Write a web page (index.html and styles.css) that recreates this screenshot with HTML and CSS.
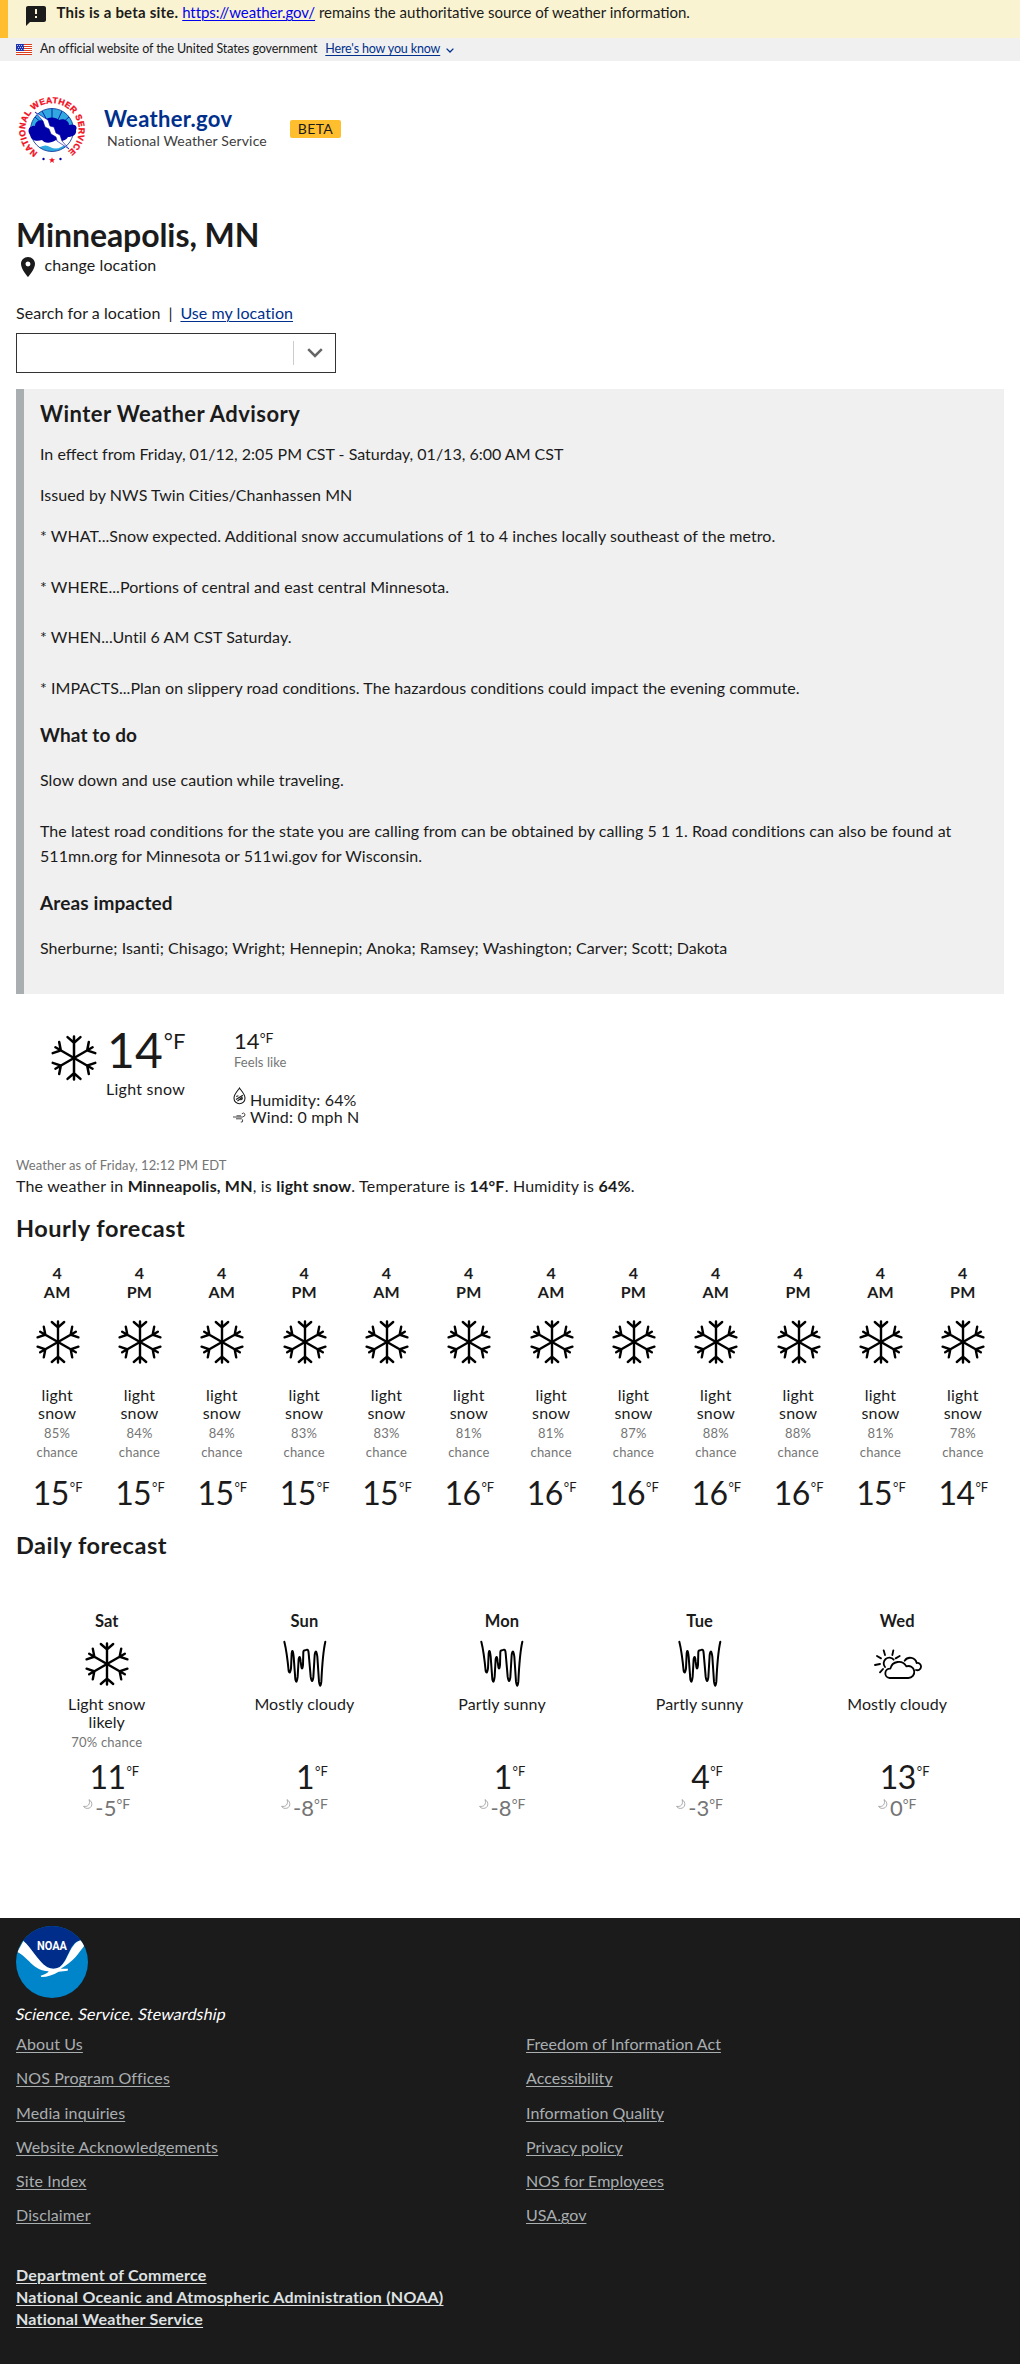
FILE: index.html
```html
<!DOCTYPE html>
<html lang="en">
<head>
<meta charset="utf-8">
<title>Weather.gov</title>
<link rel="stylesheet" href="styles.css">
</head>
<body>
<svg class="sprite" width="0" height="0">
  <symbol id="snow" viewBox="-24 -24 48 48">
    <g fill="none" stroke="#000" stroke-width="2.4" stroke-linecap="round">
      <path id="flake-arm" d="M0 0V-20.6M-6.2-20L0-14.6L6.2-20"/>
      <use href="#flake-arm" transform="rotate(60)"/>
      <use href="#flake-arm" transform="rotate(120)"/>
      <use href="#flake-arm" transform="rotate(180)"/>
      <use href="#flake-arm" transform="rotate(240)"/>
      <use href="#flake-arm" transform="rotate(300)"/>
    </g>
  </symbol>
  <symbol id="scribble" viewBox="841 150 144 144">
    <path fill="none" stroke="#000" stroke-width="6" stroke-linecap="round" d="M851 155C856 175 860 200 864 243Q868 255 871 235L873 190Q876 172 879 200L884 268Q888 285 891 260L894 207Q898 192 900 215L902 230Q905 243 907 225L908 185Q908 182 913 181L919 179Q923 178 924 190L930 260Q934 285 938 262L942 195Q946 172 950 200L955 275Q959 300 962 275Q966 190 974 155"/>
  </symbol>
  <symbol id="suncloud" viewBox="1119 150 144 144">
    <g fill="none" stroke="#000" stroke-width="5.5" stroke-linecap="round" stroke-linejoin="round">
      <path d="M1166 264H1222A18 18 0 1 0 1216 229A26 26 0 0 0 1168 236A14 14 0 0 0 1166 264Z"/>
      <path d="M1211 212A20 20 0 0 1 1247 219A11 11 0 1 1 1245 240"/>
      <path d="M1152 231A17 17 0 1 1 1178 209"/>
      <path d="M1148 181L1152 195M1177 181L1174 195M1128 198L1140 205M1122 225L1137 222M1137 247L1146 237M1184 205L1196 198"/>
    </g>
  </symbol>
  <symbol id="moon" viewBox="0 0 10 10">
    <path fill="none" stroke="#8a8a8a" stroke-width=".7" d="M6 .6C10.5 3.2 9.4 9.4 4.4 9.4C2.6 9.4 1.2 8.6.6 7.3C5 8.2 7.6 5 6 .6Z"/>
  </symbol>
</svg>

<div class="beta-bar">
  <svg class="beta-bar-icon" width="24" height="24" viewBox="0 0 24 24"><path fill="#1b1b1b" d="M20 2H4c-1.1 0-1.99.9-1.99 2L2 22l4-4h14c1.1 0 2-.9 2-2V4c0-1.1-.9-2-2-2zm-7 12h-2v-2h2v2zm0-4h-2V5h2v5z"/></svg>
  <p><strong>This is a beta site.</strong> <a href="#">https://weather.gov/</a> remains the authoritative source of weather information.</p>
</div>
<div class="gov-banner">
  <svg class="flag" width="16" height="11" viewBox="0 0 16 11"><path fill="#fff" d="M0 0h16v11H0z"/><path fill="#db3e1f" d="M0 0h16v1H0zM0 2h16v1H0zM0 4h16v1H0zM0 6h16v1H0zM0 8h16v1H0zM0 10h16v1H0z"/><path fill="#1e33b1" d="M0 0h8v7H0z"/><path stroke="#fff" stroke-width=".8" stroke-dasharray=".9 1.1" d="M1 1.5h6.5M2 3.5h5.5M1 5.5h6.5"/></svg>
  <span class="gov-text">An official website of the United States government</span>
  <a class="gov-link" href="#">Here's how you know</a>
  <svg width="8" height="5" viewBox="0 0 8 5"><path d="M.6.6L4 4L7.4.6" fill="none" stroke="#00308c" stroke-width="1.3"/></svg>
</div>

<header class="header">
  <svg class="nws" width="72" height="72" viewBox="-36 -36 72 72">
    <defs>
      <path id="ring" d="M-14.2 22.700A26.800 26.800 0 1 1 14.2 22.700"/>
      <clipPath id="disc"><circle r="21.500"/></clipPath>
    </defs>
    <g clip-path="url(#disc)">
      <circle r="21.500" fill="#fff"/>
      <path fill="#2fa9e0" d="M-22-22H22V-4H-22ZM-22 17Q-16 19-12 17Q-6 14-2 17Q4 20 9 17Q15 13 22 17V24H-22Z"/>
      <path d="M-17-13L-8-5M-10-19L-4-8M0-22V-8M10-19L5-8M17-13L9-6" stroke="#0000a0" stroke-width=".8"/>
    </g>
    <circle r="21.500" fill="none" stroke="#123f9e" stroke-width=".9"/>
    <path fill="#0000a8" d="M-22 5C-26-1-21-5-17-4C-17-9-11-11-8-9C-4-14 4-13 7-10C12-12 17-9 17-5C23-7 26-3 24 0C25 5 20 7 16 7C14 11 8 12 4 10C-2 14-8 13-10 10C-16 12-21 10-22 5Z"/>
    <path fill="#fff" stroke="#0000a8" stroke-width=".6" d="M-17-18L-4-10L-2-4L2-3L4 3L8 5L10 11L17 19L5 11L4 7L-1 4L-3-1L-7-3L-9-9Z"/>
    <text class="ring-text"><textPath href="#ring" textLength="136" lengthAdjust="spacing">NATIONAL WEATHER SERVICE</textPath></text>
    <path fill="#f00d1c" d="M0 27.200L.8 29.300H3L1.300 30.700L1.900 32.900L0 31.600L-1.900 32.900L-1.300 30.700L-3 29.300H-.8Z"/>
    <circle cx="-8.500" cy="29" r="1.200" fill="#0000a8"/><circle cx="8.500" cy="29" r="1.200" fill="#0000a8"/>
  </svg>
  <div class="brand">
    <div class="brand-name">Weather.gov</div>
    <div class="brand-sub">National Weather Service</div>
  </div>
  <span class="beta-tag">BETA</span>
</header>

<main>
  <h1>Minneapolis, MN</h1>
  <div class="change"><svg width="24" height="24" viewBox="0 0 24 24"><path fill="#1b1b1b" d="M12 2C8.130 2 5 5.130 5 9c0 5.250 7 13 7 13s7-7.750 7-13c0-3.870-3.130-7-7-7zm0 9.500a2.500 2.500 0 0 1 0-5 2.500 2.500 0 0 1 0 5z"/></svg><span>change location</span></div>
  <div class="search-label"><span>Search for a location</span><span class="bar">|</span><a href="#">Use my location</a></div>
  <div class="combo"><i class="combo-sep"></i><svg width="16" height="10" viewBox="0 0 16 10"><path d="M1.200 1.200L8 8L14.800 1.200" fill="none" stroke="#666" stroke-width="2.500"/></svg></div>

  <section class="alert">
    <h2>Winter Weather Advisory</h2>
    <p class="effect">In effect from Friday, 01/12, 2:05 PM CST - Saturday, 01/13, 6:00 AM CST</p>
    <p>Issued by NWS Twin Cities/Chanhassen MN</p>
    <p>* WHAT...Snow expected. Additional snow accumulations of 1 to 4 inches locally southeast of the metro.<br><br>* WHERE...Portions of central and east central Minnesota.<br><br>* WHEN...Until 6 AM CST Saturday.<br><br>* IMPACTS...Plan on slippery road conditions. The hazardous conditions could impact the evening commute.</p>
    <h3>What to do</h3>
    <p>Slow down and use caution while traveling.<br><br>The latest road conditions for the state you are calling from can be obtained by calling 5 1 1. Road conditions can also be found at<br>511mn.org for Minnesota or 511wi.gov for Wisconsin.</p>
    <h3>Areas impacted</h3>
    <p>Sherburne; Isanti; Chisago; Wright; Hennepin; Anoka; Ramsey; Washington; Carver; Scott; Dakota</p>
  </section>

  <section class="current">
    <svg class="now-icon" width="50" height="50"><use href="#snow"/></svg>
    <div class="now">
      <div class="now-temp">14<sup>°F</sup></div>
      <div class="now-text">Light snow</div>
    </div>
    <div class="details">
      <div class="feels">14<sup>°F</sup></div>
      <div class="feels-label">Feels like</div>
      <div class="detail first"><svg width="13" height="18" viewBox="0 0 13 18"><path d="M6.500 1C8 3.500 12 7 12 11.200A5.500 5.500 0 0 1 1 11.200C1 7 5 3.500 6.500 1Z" fill="none" stroke="#1b1b1b" stroke-width="1.100"/><path d="M3 12.500L9.800 8.200M3.200 9.500l2.200-.8M7.500 13l2.400-1.400M4.500 14l5-4" stroke="#1b1b1b" stroke-width="1.100"/></svg><span>Humidity: 64%</span></div>
      <div class="detail"><svg width="13" height="17" viewBox="0 0 13 17"><path d="M0 9H9.500Q12.300 8.500 12 6.200Q10.500 4 8.800 5.800M3 10.800H8.500Q10.500 11.500 9.300 14H7.800M3.500 7.800H8" fill="none" stroke="#333" stroke-width=".9"/></svg><span>Wind: 0 mph N</span></div>
    </div>
  </section>
  <p class="asof">Weather as of Friday, 12:12 PM EDT</p>
  <p class="summary">The weather in <b>Minneapolis, MN</b>, is <b>light snow</b>. Temperature is <b>14°F</b>. Humidity is <b>64%</b>.</p>

  <h2 class="forecast-title">Hourly forecast</h2>
  <div class="hourly" id="hourly"></div>
  <h2 class="forecast-title daily-title">Daily forecast</h2>
  <div class="daily" id="daily"></div>
</main>

<footer>
  <svg class="noaa" width="72" height="72" viewBox="0 0 216 216">
    <defs><clipPath id="seal"><circle cx="108" cy="108" r="108"/></clipPath></defs>
    <g clip-path="url(#seal)">
      <path fill="#0085ca" d="M0 0H216V216H0Z"/>
      <path fill="#002d8a" d="M0-10H216L195 43Q172 44 158 80Q140 124 120 128Q96 132 70 104Q50 78 22 43Z"/>
      <path fill="#fff" d="M22 45C48 66 62 102 94 124Q112 132 130 124C158 106 160 52 194 43L206 58C186 84 172 108 134 128L156 128L155 134L128 137Q104 152 76 153L74 149Q92 145 98 136C50 134 36 92 4 78Z"/>
    </g>
    <text x="108" y="71" text-anchor="middle" textLength="90" lengthAdjust="spacingAndGlyphs" class="noaa-text">NOAA</text>
  </svg>
  <p class="motto">Science. Service. Stewardship</p>
  <div class="links">
    <ul><li><a href="#">About Us</a></li><li><a href="#">NOS Program Offices</a></li><li><a href="#">Media inquiries</a></li><li><a href="#">Website Acknowledgements</a></li><li><a href="#">Site Index</a></li><li><a href="#">Disclaimer</a></li></ul>
    <ul class="second"><li><a href="#">Freedom of Information Act</a></li><li><a href="#">Accessibility</a></li><li><a href="#">Information Quality</a></li><li><a href="#">Privacy policy</a></li><li><a href="#">NOS for Employees</a></li><li><a href="#">USA.gov</a></li></ul>
  </div>
  <div class="agencies"><a href="#">Department of Commerce</a><a href="#">National Oceanic and Atmospheric Administration (NOAA)</a><a href="#">National Weather Service</a></div>
</footer>
<script src="forecast.js"></script>
</body>
</html>
```
FILE: styles.css
```css
* { box-sizing: border-box; }
body { margin: 0; background: #fff; color: #1b1b1b; font: 16px/24px Lato, "Noto Sans", sans-serif; letter-spacing: .06px; }
h1, h2, h3, p, ul { margin: 0; padding: 0; }
li { list-style: none; }
svg { display: block; flex: none; }
.sprite { position: absolute; }
a { color: #00308c; text-decoration-thickness: 1px; text-underline-offset: 2px; }
sup { line-height: 0; }

.beta-bar { display: flex; height: 38px; padding-left: 16px; border-left: 8px solid #ffbe2e; background: #faf3d1; font-size: 15px; line-height: 24px; letter-spacing: 0; }
.beta-bar-icon { margin: 4px 8.5px 0 0; }
.beta-bar strong { letter-spacing: .22px; }
.beta-bar a { color: #0000ee; letter-spacing: -.1px; }

.gov-banner { display: flex; height: 23px; padding-left: 16px; background: #f0f0f0; font-size: 12.5px; line-height: 21px; letter-spacing: -.11px; }
.flag { margin: 6px 8px 0 0; }
.gov-text { margin-right: 8px; }
.gov-link { margin-right: 6px; letter-spacing: -.15px; }
.gov-banner svg:last-child { margin-top: 10px; }

.header { display: flex; align-items: flex-start; height: 154px; padding: 33px 16px 0; }
.brand { width: 186px; margin: 12px 0 0 16px; }
.brand-name { color: #00308c; font-size: 22px; font-weight: 700; line-height: 26px; letter-spacing: .33px; }
.brand-sub { padding-left: 3px; color: #3d3d3d; font-size: 14px; line-height: 18px; letter-spacing: .15px; }
.beta-tag { width: 51px; height: 18px; margin-top: 26px; border-radius: 2px; background: #ffbe2e; font-size: 14px; line-height: 17px; letter-spacing: .4px; text-align: center; }
.ring-text { fill: #f00d1c; stroke: #f00d1c; stroke-width: .3px; font: 700 8.6px "Liberation Sans Narrow", "Liberation Sans", sans-serif; letter-spacing: 0; }

main { display: block; padding: 0 16px; height: 1703px; }
h1 { height: 38px; font-size: 32px; line-height: 40px; letter-spacing: -.08px; }
.change { display: flex; height: 24px; gap: 4.5px; letter-spacing: .12px; }
.change svg { margin-top: 2px; }
.search-label { display: flex; margin-top: 24px; }
.bar { width: 20px; text-align: center; }
.combo { display: flex; align-items: center; justify-content: flex-end; gap: 13px; width: 320px; height: 40px; margin-top: 8px; padding-right: 12px; border: 1px solid #333; }
.combo-sep { width: 1px; height: 24px; background: #ccc; }

.alert { height: 605px; margin-top: 16px; padding: 11px 16px 0; border-left: 8px solid #a9aeb1; background: #f0f0f0; }
.alert h2 { font-size: 22px; line-height: 28px; letter-spacing: .46px; }
.alert h3 { margin: 22.3px 0 20.5px; font-size: 19px; line-height: 24px; letter-spacing: .12px; }
.alert p { line-height: 25.3px; }
.alert p + p { margin-top: 15.8px; }
.alert .effect { margin-top: 13px; letter-spacing: 0; }

.current { display: flex; align-items: flex-start; height: 161px; padding: 31px 0 0 33px; }
.now-icon { margin-top: 8px; }
.now { width: 128px; margin-left: 7px; }
.now-temp { padding-left: 1px; font-size: 48px; line-height: 49px; height: 48px; }
.now-temp sup { margin-left: 1px; font-size: 22px; vertical-align: 19px; }
.now-text { margin-top: 6px; line-height: 20px; letter-spacing: .26px; }
.details { margin-top: 2.5px; }
.feels { font-size: 22px; line-height: 26px; }
.feels sup { font-size: 14px; vertical-align: 6px; }
.feels-label { color: #757575; font-size: 13px; line-height: 16px; }
.detail { display: flex; height: 17px; gap: 4px; margin-left: -1px; line-height: 17px; letter-spacing: .18px; }
.first { margin-top: 21px; }
.first svg { margin-top: -4px; }
.asof { color: #757575; font-size: 13px; line-height: 20px; height: 19px; letter-spacing: .07px; }
.summary { line-height: 24px; letter-spacing: .19px; }

.forecast-title { margin-top: 16px; font-size: 23.5px; line-height: 28px; letter-spacing: .52px; }
.hourly { display: grid; grid-template-columns: repeat(12, 1fr); height: 273px; padding-top: 21px; text-align: center; }
.slot { display: flex; flex-direction: column; align-items: center; }
.slot-time { font-weight: 700; line-height: 19px; letter-spacing: .2px; }
.slot svg { margin: 16.5px 0 20.3px 1px; }
.slot-text { line-height: 18.3px; letter-spacing: .2px; }
.chance { margin-top: 2px; color: #757575; font-size: 13px; line-height: 18.3px; letter-spacing: .2px; }
.temp { height: 32px; font-size: 32px; line-height: 33px; letter-spacing: -.6px; }
.temp sup { font-size: 13px; letter-spacing: 0; vertical-align: 13px; margin-left: 1px; }
.slot .temp { margin: 15px 0 0 1px; }

.daily { display: grid; grid-template-columns: repeat(5, 1fr); margin: 0 8px 0 -8px; padding-top: 51.6px; text-align: center; }
.day { display: flex; flex-direction: column; align-items: center; }
.day-name { font-size: 16.5px; font-weight: 700; line-height: 20px; letter-spacing: .1px; }
.day svg.day-icon { margin: 9.4px 0 7px 1px; }
.day-desc { height: 64.6px; }
.day-text { line-height: 18px; letter-spacing: .1px; }
.day .temp { margin-left: 15px; }
.low { display: flex; margin-top: 4px; color: #757575; font-size: 22px; line-height: 24px; letter-spacing: .1px; }
.low svg { margin: 3px 2px 0 0; }
.low sup { font-size: 14px; letter-spacing: 0; vertical-align: 7px; }
.daily-title { margin-top: 16px; }

footer { height: 446px; padding: 8px 16px 0; background: #1b1b1b; }
.noaa-text { fill: #fff; font: 700 36px Roboto, sans-serif; letter-spacing: 0; }
.motto { width: max-content; margin-top: 4px; color: #fff; letter-spacing: .14px; transform: skewX(-12deg); }
.links { display: grid; grid-template-columns: 510px 1fr; margin-top: 6.2px; letter-spacing: .12px; }
.links ul { display: grid; gap: 10.2px; }
.links .second { letter-spacing: .04px; }
.links a { color: #a9aeb1; }
.agencies { display: flex; flex-direction: column; align-items: flex-start; margin-top: 37px; font-weight: 700; line-height: 22px; letter-spacing: .23px; }
.agencies a { color: #dfe1e2; }
```
FILE: forecast.js
```
const chances = [85, 84, 84, 83, 83, 81, 81, 87, 88, 88, 81, 78];
const temps = [15, 15, 15, 15, 15, 16, 16, 16, 16, 16, 15, 14];
document.getElementById('hourly').innerHTML = temps.map((t, i) => `
  <div class="slot">
    <div class="slot-time">4<br>${i % 2 ? 'PM' : 'AM'}</div>
    <svg width="48" height="48"><use href="#snow"/></svg>
    <div class="slot-text">light<br>snow</div>
    <div class="chance">${chances[i]}%<br>chance</div>
    <div class="temp">${t}<sup>°F</sup></div>
  </div>`).join('');

const days = [
  ['Sat', 'snow', 'Light snow<br>likely', '70% chance', '11', '-5'],
  ['Sun', 'scribble', 'Mostly cloudy', '', '1', '-8'],
  ['Mon', 'scribble', 'Partly sunny', '', '1', '-8'],
  ['Tue', 'scribble', 'Partly sunny', '', '4', '-3'],
  ['Wed', 'suncloud', 'Mostly cloudy', '', '13', '0'],
];
document.getElementById('daily').innerHTML = days.map(([name, icon, text, chance, high, low]) => `
  <div class="day">
    <div class="day-name">${name}</div>
    <svg class="day-icon" width="48" height="48"><use href="#${icon}"/></svg>
    <div class="day-desc"><div class="day-text">${text}</div>${chance ? `<div class="chance">${chance}</div>` : ''}</div>
    <div class="temp">${high}<sup>°F</sup></div>
    <div class="low"><svg width="10" height="10"><use href="#moon"/></svg><span>${low}<sup>°F</sup></span></div>
  </div>`).join('');
```
